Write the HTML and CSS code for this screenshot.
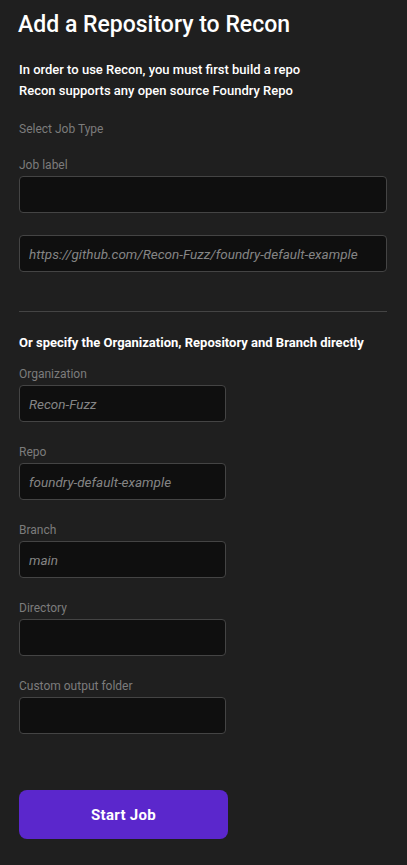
FILE: index.html
```html
<!DOCTYPE html>
<html lang="en">
<head>
  <meta charset="UTF-8" />
  <meta name="viewport" content="width=device-width, initial-scale=1" />
  <title>Add a Repository to Recon</title>
  <link rel="stylesheet" href="styles.css">
</head>
<body>

  <main class="panel">
    <h1>Add a Repository to Recon</h1>

    <p class="intro">In order to use Recon, you must first build a repo</p>
    <p class="intro">Recon supports any open source Foundry Repo</p>

    <label class="field-label job-type">Select Job Type</label>

    <label class="field-label" for="jobLabel">Job label</label>
    <input type="text" id="jobLabel" class="wide" />

    <input type="text" id="repoUrl" class="wide url" placeholder="https://github.com/Recon-Fuzz/foundry-default-example" />

    <hr class="divider" />

    <p class="direct">Or specify the Organization, Repository and Branch directly</p>

    <!-- Org / repo / branch -->
    <div class="field">
      <label class="field-label" for="org">Organization</label>
      <input type="text" id="org" placeholder="Recon-Fuzz" />
    </div>

    <div class="field">
      <label class="field-label" for="repo">Repo</label>
      <input type="text" id="repo" placeholder="foundry-default-example" />
    </div>

    <div class="field">
      <label class="field-label" for="branch">Branch</label>
      <input type="text" id="branch" placeholder="main" />
    </div>

    <div class="field">
      <label class="field-label" for="directory">Directory</label>
      <input type="text" id="directory" />
    </div>

    <div class="field">
      <label class="field-label" for="outFolder">Custom output folder</label>
      <input type="text" id="outFolder" />
    </div>

    <button class="start-btn">Start Job</button>
  </main>

</body>
</html>
```

FILE: styles.css
```css
body {
  margin: 0;
  background: #1f1f1f;
  font-family: Roboto, "Liberation Sans", sans-serif;
  color: #fff;
}

.panel {
  padding: 12px 20px 40px 19px;
}

h1 {
  margin: 0 0 24px -1px;
  font-size: 23px;
  line-height: 26px;
  font-weight: 500;
}

.intro {
  margin: 0 0 5px;
  font-size: 13px;
  line-height: 16px;
  font-weight: 500;
}

.field-label {
  display: block;
  font-size: 12px;
  line-height: 16px;
  color: #7c7c7c;
  margin-bottom: 3px;
}

.job-type {
  margin-top: 22px;
  margin-bottom: 20px;
}

input {
  display: block;
  box-sizing: border-box;
  height: 37px;
  width: 207px;
  padding: 0 9px;
  background: #0f0f0f;
  border: 1px solid #444;
  border-radius: 4px;
  color: #ddd;
  font-family: inherit;
  font-size: 13.5px;
}

input::placeholder {
  color: #858585;
  font-style: italic;
}

input.wide {
  width: 100%;
}

input.url {
  margin-top: 22px;
}

.divider {
  margin: 39px 0 0;
  border: none;
  border-top: 1px solid #444;
}

.direct {
  margin: 23px 0 15px;
  font-size: 13px;
  line-height: 16px;
  font-weight: 700;
}

.field {
  margin-bottom: 22px;
}

.start-btn {
  margin-top: 34px;
  width: 209px;
  height: 49px;
  border: none;
  border-radius: 8px;
  background: #5b27cc;
  color: #fff;
  font-family: inherit;
  font-size: 15px;
  font-weight: 700;
  letter-spacing: 0.3px;
  cursor: pointer;
}

.start-btn:hover {
  background: #4e1fb5;
}
```
